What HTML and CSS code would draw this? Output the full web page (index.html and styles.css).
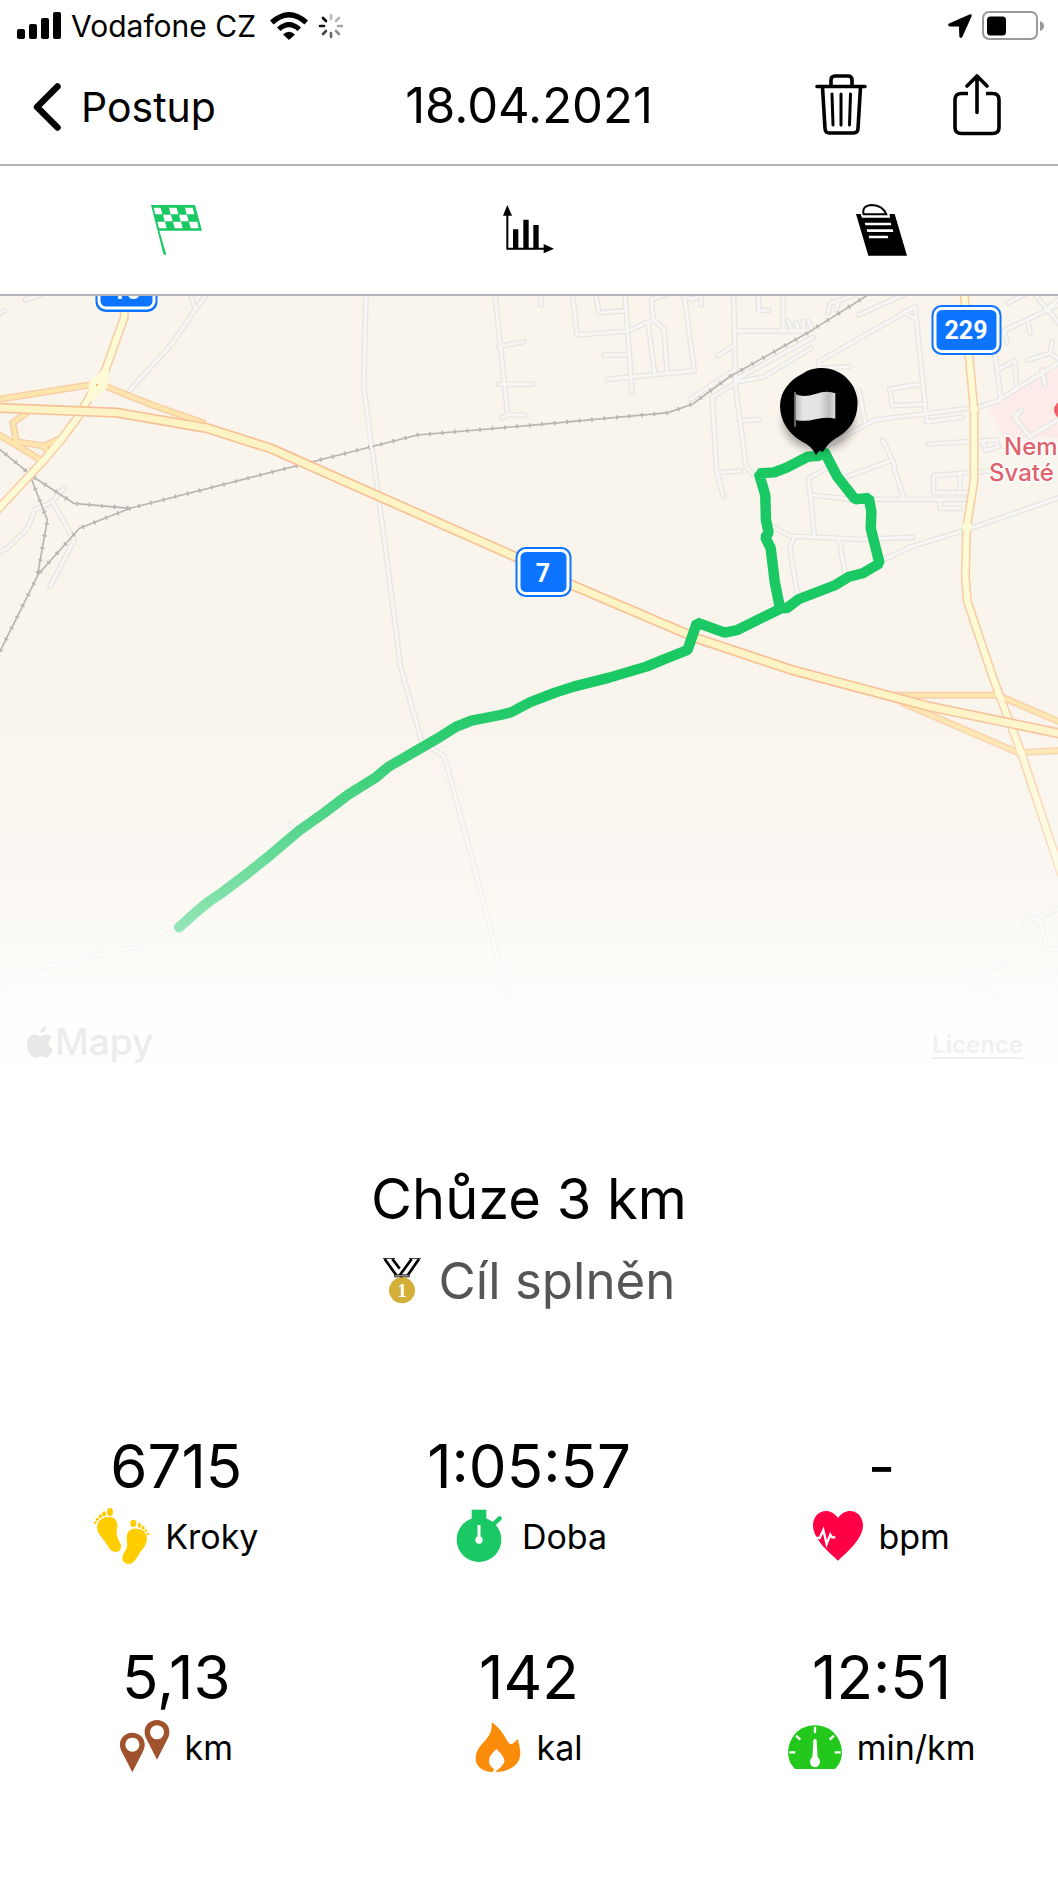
FILE: index.html
```html
<!DOCTYPE html>
<html lang="cs">
<head>
<meta charset="utf-8">
<meta name="viewport" content="width=device-width, initial-scale=1">
<title>18.04.2021</title>
<link rel="stylesheet" href="styles.css">
</head>
<body>
<div class="status">
  <div class="status-group">
    <svg class="signal" width="44" height="28" viewBox="0 0 44 28" aria-hidden="true"><rect y="17" width="8" height="10" rx="2"/><rect x="12" y="12" width="8" height="15" rx="2"/><rect x="24" y="6" width="8" height="21" rx="2"/><rect x="36" width="8" height="27" rx="2"/></svg>
    <span>Vodafone CZ</span>
    <svg class="wifi" width="38" height="28" viewBox="0 0 38 28" aria-hidden="true"><path d="M0 8.500Q19-8.500 38 8.500L34.500 12.500Q19-1.500 3.500 12.500Z"/><path d="M7 15.500Q19 4.500 31 15.500L27.500 19Q19 11.500 10.500 19Z"/><path d="M13 22.500Q19 17 25 22.500L19 28Z"/></svg>
    <svg width="26" height="26" viewBox="-13 -13 26 26" fill="none" stroke-width="2.600" stroke-linecap="round" aria-hidden="true"><path d="M0-11V-7" stroke="#bbb"/><path d="M8-8 5-5" stroke="#b5b5b5"/><path d="M7 0h4" stroke="#a5a5a5"/><path d="M5 5 8 8" stroke="#8c8c8c"/><path d="M0 7v4" stroke="#666"/><path d="M-5 5-8 8" stroke="#444"/><path d="M-11 0h4" stroke="#111"/><path d="M-8-8-5-5" stroke="#000"/></svg>
  </div>
  <div class="status-group">
    <svg width="24" height="24" viewBox="0 0 24 24" aria-hidden="true"><path d="M1 9.500 22 .2Q24 0 23.700 2L14.300 23Q12.300 25 11.300 22.500L11 12.600 1.500 12.500Q-1 11.500 1 9.500Z"/></svg>
    <svg width="62" height="30" viewBox="0 0 62 30" aria-hidden="true"><rect x="1" y="1" width="54" height="27" rx="6" fill="none" stroke="#999" stroke-width="2"/><rect x="5" y="5.500" width="19" height="19" rx="3.500"/><path d="M58 10q4 1.500 4 5t-4 5z" fill="#999"/></svg>
  </div>
</div>

<header class="bar">
  <a class="back" href="#">
    <svg width="28" height="48" viewBox="0 0 28 48" fill="none" stroke="#000" stroke-width="6.500" stroke-linecap="round" stroke-linejoin="round" aria-hidden="true"><path d="M24.500 3.500 4 24 24.500 44.500"/></svg>
    <span>Postup</span>
  </a>
  <h1 class="date">18.04.2021</h1>
  <div class="actions">
    <button type="button" aria-label="Smazat"><svg width="52" height="62" viewBox="0 0 52 62" fill="none" stroke="#000" stroke-width="3.600" stroke-linecap="round" stroke-linejoin="round" aria-hidden="true"><path d="M2 12.500H50M16 12V6Q16 2 20 2H33Q37 2 37 6V12M7.500 13 10 54.500Q10.200 59 14.500 59H38.500Q42.800 59 43 54.500L45.500 13"/><path d="M17 20 18 51M26 20V51M35.500 20 34.500 51" stroke-width="3"/></svg></button>
    <button type="button" aria-label="Sdílet"><svg width="48" height="62" viewBox="0 0 48 62" fill="none" stroke="#000" stroke-width="3.600" stroke-linecap="round" stroke-linejoin="round" aria-hidden="true"><path d="M15 19.500H8.500Q2 19.500 2 25.500V53.500Q2 59.500 8.500 59.500H39.500Q46 59.500 46 53.500V25.500Q46 19.500 39.500 19.500H33" stroke-linecap="butt"/><path d="M24 38.500V3M14 12 24 2 34 12"/></svg></button>
  </div>
</header>

<nav class="tabs" aria-label="Zobrazení">
  <button type="button" aria-label="Trasa">
    <svg width="51" height="50" viewBox="0 0 153 150" fill="#1ac864" aria-hidden="true"><path d="M0 0H132L153 77H25L46 149H38Z"/><path d="M8 8H29L34 28H13ZM54 8H77L82 28H59ZM102 8H125L130 28H107ZM36 29H60L65 49H41ZM84 29H108L113 49H89ZM19 50H42L47 70H24ZM66 50H90L95 70H71ZM114 50H139L143 70H119Z" fill="#fff"/></svg>
  </button>
  <button type="button" aria-label="Grafy">
    <svg width="51" height="50" viewBox="0 0 153 150" aria-hidden="true"><path d="M13 0 27 32H16V128H122V117L153 131 122 145V134H10V32H0ZM30 73H46V131H30ZM61 44H77V131H61ZM91 60H107V131H91Z"/></svg>
  </button>
  <button type="button" aria-label="Poznámky">
    <svg width="51" height="52" viewBox="0 0 153 156" aria-hidden="true"><path d="M0 30H14L18 41H102L101 30H116L153 155H37Z"/><path d="M23 31Q16 5 48 3Q80 4 91 31Z" fill="#fff" stroke="#000" stroke-width="6"/><path d="M26 56H104L106 64H28ZM32 76H110L112 84H34ZM38 95H95L97 103H40Z" fill="#fff"/></svg>
  </button>
</nav>

<main>
<section class="map" aria-label="Mapa trasy">
<svg class="map-canvas" viewBox="0 0 1058 784" aria-hidden="true">
  <defs>
    <linearGradient id="fade" x1="0" y1="394" x2="0" y2="784" gradientUnits="userSpaceOnUse"><stop offset="0" stop-color="#fff" stop-opacity="0"/><stop offset=".35" stop-color="#fff" stop-opacity=".26"/><stop offset=".61" stop-color="#fff" stop-opacity=".53"/><stop offset=".8" stop-color="#fff" stop-opacity=".82"/><stop offset="1" stop-color="#fff"/></linearGradient>
    <linearGradient id="cloth"><stop offset="0" stop-color="#bbb"/><stop offset=".2" stop-color="#e6e6e6"/><stop offset=".6" stop-color="#e2e2e2"/><stop offset=".85" stop-color="#bdbdbd"/><stop offset="1" stop-color="#ddd"/></linearGradient>
    <filter id="soft" x="-50%" y="-50%" width="200%" height="200%"><feGaussianBlur stdDeviation="14"/></filter>
    <g id="streets">
      <path transform="translate(0 -6) scale(.338 .3333)" d="M1083 0 1076 290 1100 470 1150 850 1185 1130 1248 1355 1315 1400 1395 1700 1470 1990 1540 2260 1570 2350M560 0 578 58 620 0M578 58 510 160 382 303M1463 0 1502 375H1552M1502 375 1486 383M1475 170 1550 155M1475 283H1575M75 30 120 15M0 68 12 62M188 596 155 635 220 750 148 890M155 635 103 660 82 715 22 775 -10 790M515 1920 445 1962 22 2055 -10 2088M857 1603 875 1615"/>
      <path transform="translate(528 -6) scale(.338 .3333)" d="M38 0V45M130 0 145 135 298 123 370 88 365 28 420 10M198 0 210 68 290 62M286 0 308 310M225 195H300M235 268 492 242 460 0M355 98 375 250M355 98 370 88 402 118 412 252M460 20 490 28 505 15M512 0V45M608 0 615 300 645 530 665 552M615 123H830M755 0V120M682 0V60L712 62M562 197 610 165M480 328 610 240M545 322 620 275 695 262 838 175M545 322 558 545 578 618M558 548 628 543M620 265 843 142M770 95 782 120M793 97 800 120M815 95V120M830 95 840 118M625 393 685 388M860 215 1145 50 1180 395 1283 382M860 215 862 235 950 230M1110 65 1145 85M978 75 1120 10M887 68 895 40 965 15M912 60 918 35M980 300 998 400M880 470 1025 390 1330 352 1385 335 1575 215M1165 282 1070 297 1078 347 1170 343M1050 452 1085 525M1078 510 930 565M1082 530 1112 625M1185 462 1385 450 1392 470 1355 482 1345 455M1365 543 1200 557V608H1310M1278 555V605M1220 630V655H1278M835 615 960 628H1310M848 740 830 565 885 535M725 710 775 738 980 748 1138 742M788 740 775 775 798 915M920 745 938 850M1045 812 1135 770 1300 718 1575 622M1420 38 1475 10M1497 10 1575 105M1575 42 1408 122 1418 158M1478 88 1485 130M1530 60 1575 25M1382 195 1398 320M1388 240 1440 212 1445 290M1520 240 1530 285M1480 210 1545 190 1575 210M1545 190 1550 155M1460 360 1440 382 1485 440 1575 385M1468 1898 1575 1855M1510 1882 1545 2000 1575 2100M1545 1980 1575 1975M1410 2022 1300 2057 1395 2135 1575 2213M1395 2135 1425 2240M1510 2190 1530 2290"/>
    </g>
    <g id="links">
      <path transform="translate(0 -6) scale(.338 .3333)" d="M-10 329 265 285M315 290 450 345 600 398M-10 430 120 510M75 372 38 398 48 455 130 468 180 445M130 468 145 490"/>
      <path transform="translate(528 -6) scale(.338 .3333)" d="M1080 1216H1390L1575 1297M1110 1240 1450 1388 1575 1382"/>
    </g>
    <g id="main-roads">
      <path transform="translate(0 -6) scale(.338 .3333)" d="M367 40 368 80 312 240 265 320 235 375 180 450 130 510 -15 668"/>
      <path transform="translate(528 -6) scale(.338 .3333)" d="M1290 0 1305 200 1320 360V570L1298 712 1294 860 1300 935 1378 1170 1460 1390 1580 1760"/>
    </g>
    <path id="highway" transform="translate(528 -6) scale(.338 .3333)" d="M-1580 353-1217 368-947 415-762 475 6 820 130 885 500 1045 780 1140 1180 1248 1580 1332"/>
  </defs>
  <path d="M988 110 1058 71V142H1004Z" fill="#fcebe8"/>
  <use href="#streets" class="street-edge"/>
  <use href="#streets" class="street"/>
  <g transform="translate(528 -6) scale(.338 .3333)" class="rail">
    <path id="rail" d="M-1575 468-1462 562-1344 640-1177 655-327 435 6 406 415 368 487 342 600 258 820 133 1010 12M-1177 655-1327 715-1449 853M-1472 560-1422 690-1452 860-1570 1100"/>
    <use href="#rail" class="ties"/>
  </g>
  <path d="M366 -6 364 91 371 151" class="street"/>
  <use href="#links" class="link-edge"/>
  <use href="#main-roads" class="road-edge"/>
  <use href="#links" class="link"/>
  <use href="#main-roads" class="road"/>
  <path d="M89 87 102 74 109 75 107 92 91 106 88 100Z" class="junction"/>
  <circle cx="974" cy="113" r="4" class="junction"/>
  <circle cx="967" cy="231" r="5" class="junction"/>
  <use href="#highway" class="highway-edge"/>
  <use href="#highway" class="highway"/>
  <circle cx="97" cy="89" r="1" fill="#f4a860"/>
  <g class="shield">
    <rect x="95.500" y="-34" width="62" height="50" rx="10"/><rect x="99" y="-31" width="55" height="43" rx="7" class="shield-line"/>
    <text x="126" y="3">16</text>
    <rect x="515.500" y="251" width="56" height="50" rx="10"/><rect x="519" y="254.500" width="49" height="43" rx="7" class="shield-line"/>
    <text x="543" y="286">7</text>
    <rect x="931.500" y="9" width="70" height="50" rx="10"/><rect x="935" y="12.500" width="63" height="43" rx="7" class="shield-line"/>
    <text x="966" y="43">229</text>
  </g>
  <circle cx="1063" cy="114" r="9" fill="#f0606a"/>
  <g class="place"><text x="1004" y="159">Nem</text><text x="989" y="185">Svaté</text></g>
  <path transform="translate(528 -6) scale(.338 .3333)" class="route" d="M878 488 915 560 968 628 1008 624 1016 665 1014 715 1040 820 990 850 950 860 910 885 800 928 765 955 745 952 730 875 718 775 702 742 712 728 704 690 702 615 683 550 728 547 765 533 828 500 858 498M755 952 620 1020 582 1028 500 998 472 1080 405 1107 350 1130 240 1163 135 1190 80 1208 6 1237-50 1267-82 1275-167 1292-212 1310-272 1348-412 1430-450 1462-532 1514-602 1568-677 1622-762 1695-827 1748-902 1806-942 1833-982 1866-1032 1912"/>
  <g transform="translate(740 54) scale(.3333)">
    <ellipse cx="236" cy="215" rx="105" ry="85" fill="#000" opacity=".35" filter="url(#soft)"/>
    <path d="M228 316Q216 288 188 276C143 250 120 212 120 166C122 122 150 90 186 72C206 58 226 54 246 54C306 54 353 104 353 160C352 212 326 246 284 267Q264 280 249 305L242 303Q238 300 228 316Z"/>
    <path d="M166 132Q190 144 226 132T286 130V206Q256 200 226 208T166 210Z" fill="url(#cloth)"/>
    <path d="M165 126V230" stroke="#777" stroke-width="5"/>
  </g>
  <rect y="394" width="1058" height="390" fill="url(#fade)"/>
</svg>
<div class="credits">
  <span class="brand"><svg width="26" height="32" viewBox="0 0 76 94" aria-hidden="true"><path d="M56 0Q57 18 38 21Q38 6 56 0ZM38 30C44 30 50 23 60 25C66 26 70 29 73 34C60 42 60 62 76 69C70 84 62 94 54 93C48 92 46 89 39 89C31 89 29 93 23 93C10 92 0 70 0 54C0 36 11 25 23 25C30 25 34 30 38 30Z"/></svg>Mapy</span>
  <a href="#">Licence</a>
</div>
</section>

<section class="summary">
  <h2>Chůze 3 km</h2>
  <p class="goal">
    <svg width="38" height="46" viewBox="0 0 114 138" aria-hidden="true"><path d="M5 3 40 52M28 3 50 32M86 3 50 52M108 3 74 52" fill="none" stroke="#000" stroke-width="8"/><path d="M0 0H36M78 0H114" stroke="#000" stroke-width="4"/><path d="M35 50H79V57H35Z" fill="#999" stroke="#000" stroke-width="2"/><path d="M51 56H60V66H51Z"/><circle cx="57" cy="97" r="39" fill="#d4af37"/><text x="57" y="118" class="medal-number">1</text></svg>
    <span>Cíl splněn</span>
  </p>
</section>

<dl class="stats">
  <div class="stat"><dd>6715</dd><dt><svg width="56" height="56" viewBox="0 0 168 168" fill="#ffcd00" aria-hidden="true"><ellipse cx="48" cy="12" rx="9" ry="12"/><ellipse cx="30" cy="18" rx="6" ry="8"/><ellipse cx="19" cy="25" rx="5" ry="6"/><circle cx="10" cy="34" r="5"/><circle cx="4" cy="44" r="4"/><path d="M38 27C56 24 70 34 70 52C69 66 65 76 72 92C80 108 84 114 79 124C75 134 58 136 48 124C38 110 30 96 18 82C2 62 8 32 38 27Z"/><ellipse cx="118" cy="46" rx="9" ry="11"/><ellipse cx="136" cy="52" rx="5" ry="8"/><ellipse cx="147" cy="59" rx="5" ry="6"/><circle cx="156" cy="68" r="4"/><circle cx="162" cy="78" r="4"/><path d="M130 62C152 64 162 80 158 100C154 118 142 126 134 140C126 154 118 168 102 168C86 166 82 152 88 138C94 126 102 120 99 102C96 82 100 60 130 62Z"/></svg>Kroky</dt></div>
  <div class="stat"><dd>1:05:57</dd><dt><svg width="56" height="56" viewBox="0 0 168 168" fill="#1ac864" aria-hidden="true"><circle cx="84" cy="95" r="67"/><path d="M62 5H106V40H62Z"/><path d="M126 50 146 31" stroke="#1ac864" stroke-width="13" stroke-linecap="round"/><path d="M84 51V92" stroke="#fff" stroke-width="9"/><circle cx="84" cy="96" r="11" fill="#fff"/></svg>Doba</dt></div>
  <div class="stat"><dd>-</dd><dt><svg width="50" height="56" viewBox="0 0 150 168" aria-hidden="true"><path d="M75 158C46 132 0 92 0 52C0 8 50-8 75 30C100-8 150 8 150 52C150 92 104 132 75 158Z" fill="#ff0046"/><path d="M0 90H20L31 66 41 108 52 80 57 88H67" fill="none" stroke="#fff" stroke-width="7"/></svg>bpm</dt></div>
  <div class="stat"><dd>5,13</dd><dt><svg width="50" height="56" viewBox="0 0 150 168" fill="#a0522d" fill-rule="evenodd" aria-hidden="true"><path d="M37 160 7 101C-12 68 10 41 37 41S86 68 67 101ZM37 56a21 21 0 1 0 .1 0Z"/><path d="M111 122 81 63C62 30 84 3 111 3S160 30 141 63ZM111 19a21 21 0 1 0 .1 0Z"/></svg>km</dt></div>
  <div class="stat"><dd>142</dd><dt><svg width="46" height="56" viewBox="0 0 138 168" fill="#fa8c0a" aria-hidden="true"><path d="M50 9C68 22 82 40 90 54C97 66 102 76 110 76Q120 70 128 60C134 84 140 102 132 122C124 142 96 160 60 159C76 146 90 136 88 122C84 108 72 100 66 90C54 98 42 112 42 126C42 138 50 146 58 150L52 160C22 156 2 142 2 120C2 90 22 76 36 58C48 44 52 26 50 9Z"/></svg>kal</dt></div>
  <div class="stat"><dd>12:51</dd><dt><svg width="54" height="56" viewBox="0 0 162 168" aria-hidden="true"><path d="M21 150C-6 124-4 86 12 58C28 30 54 19 81 19S134 30 150 58C166 86 168 124 141 150Z" fill="#23c81c"/><path d="M81 23V42M24 50 37 62M138 50 125 62M4 100H22M140 100H158" stroke="#fff" stroke-width="7"/><path d="M81 60Q85 60 86 64L89 114Q97 120 96 129Q94 144 81 145Q67 143 66 129Q65 120 73 114L76 64Q77 60 81 60Z" fill="#fff"/></svg>min/km</dt></div>
</dl>
</main>
</body>
</html>
```
FILE: styles.css
```css
* {
  box-sizing: border-box;
}

body {
  margin: 0;
  background: #fff;
  color: #000;
  font-family: Inter, "Liberation Sans", sans-serif;
}

svg {
  display: block;
  flex: none;
}

h1, h2, p, dl, dd {
  margin: 0;
  font-weight: 400;
}

button {
  padding: 0;
  border: 0;
  background: none;
}

.status {
  display: flex;
  align-items: center;
  justify-content: space-between;
  height: 52px;
  padding: 0 14px 0 17px;
  font-size: 30px;
}

.status-group {
  display: flex;
  align-items: center;
  gap: 10px;
}

.wifi {
  margin-left: 4px;
}

.bar {
  display: grid;
  grid-template-columns: 1fr auto 1fr;
  align-items: center;
  height: 114px;
  padding: 0 57px 6px 33px;
  border-bottom: 2px solid #b0b4b8;
}

.back {
  display: flex;
  align-items: center;
  gap: 20px;
  padding-top: 4px;
  color: #000;
  font-size: 41px;
  text-decoration: none;
}

.date {
  font-size: 49px;
  padding-left: 24px;
}

.actions {
  display: flex;
  justify-content: flex-end;
  gap: 86px;
}

.tabs {
  display: grid;
  grid-template-columns: repeat(3, 1fr);
  height: 130px;
  border-bottom: 2px solid #b0b4b8;
}

.tabs button {
  display: flex;
  align-items: center;
  justify-content: center;
}

.map {
  position: relative;
}

.map-canvas {
  width: 100%;
  background: #f9f4ec;
}

.map-canvas use,
.route,
.rail,
.street {
  fill: none;
  stroke-linecap: round;
  stroke-linejoin: round;
}

.street-edge { stroke: #e7e6e1; stroke-width: 17; }
.street { stroke: #f7f6f4; stroke-width: 9; }
path.street { stroke-width: 3; }
.rail { stroke: #b8b6b3; stroke-width: 5; }
.map-canvas .ties { stroke-width: 13; stroke-dasharray: 5 32; stroke-linecap: butt; }
.link-edge { stroke: #f9cfa8; stroke-width: 21; }
.link { stroke: #fde6ae; stroke-width: 12; }
.road-edge { stroke: #f9cda4; stroke-width: 27; }
.road { stroke: #fdfad6; stroke-width: 18; }
.junction { fill: #fdfad6; }
.highway-edge { stroke: #f8c096; stroke-width: 31; }
.highway { stroke: #fdf4c6; stroke-width: 21; }
.route { stroke: #1ac864; stroke-width: 31; stroke-linejoin: bevel; }

.shield rect { fill: #0d74ff; }
.shield .shield-line { fill: none; stroke: #fff; stroke-width: 3; }
.shield text {
  fill: #fff;
  font: 700 25px Roboto, "Liberation Sans", sans-serif;
  text-anchor: middle;
}

.place text {
  fill: #e0626c;
  stroke: #fff;
  stroke-width: 3;
  paint-order: stroke;
  font-size: 24px;
  font-weight: 500;
}

.credits {
  position: absolute;
  right: 35px;
  bottom: 16px;
  left: 27px;
  display: flex;
  align-items: center;
  justify-content: space-between;
}

.brand {
  display: flex;
  align-items: center;
  gap: 2px;
  color: #ececec;
  font-size: 37px;
  font-weight: 500;
}

.brand svg {
  fill: #e8e8e8;
}

.credits a {
  padding-top: 6px;
  color: #f0f0f0;
  font-size: 24px;
  font-weight: 600;
  text-underline-offset: 4px;
}

.summary {
  padding-top: 78px;
  text-align: center;
}

.summary h2 {
  font-size: 56px;
  line-height: 82px;
}

.goal {
  display: flex;
  align-items: center;
  justify-content: center;
  gap: 18px;
  color: #555;
  font-size: 51px;
  line-height: 82px;
}

.medal-number {
  fill: #fff;
  font: 700 58px "Liberation Serif", serif;
  text-anchor: middle;
}

.stats {
  display: grid;
  grid-template-columns: repeat(3, 1fr);
  row-gap: 71px;
  padding: 104px 0 50px;
}

.stat {
  display: flex;
  flex-direction: column;
  align-items: center;
}

.stat dd {
  font-size: 60px;
  line-height: 80px;
}

.stat dt {
  display: flex;
  order: 1;
  align-items: center;
  gap: 15px;
  height: 60px;
  font-size: 34px;
}
```
